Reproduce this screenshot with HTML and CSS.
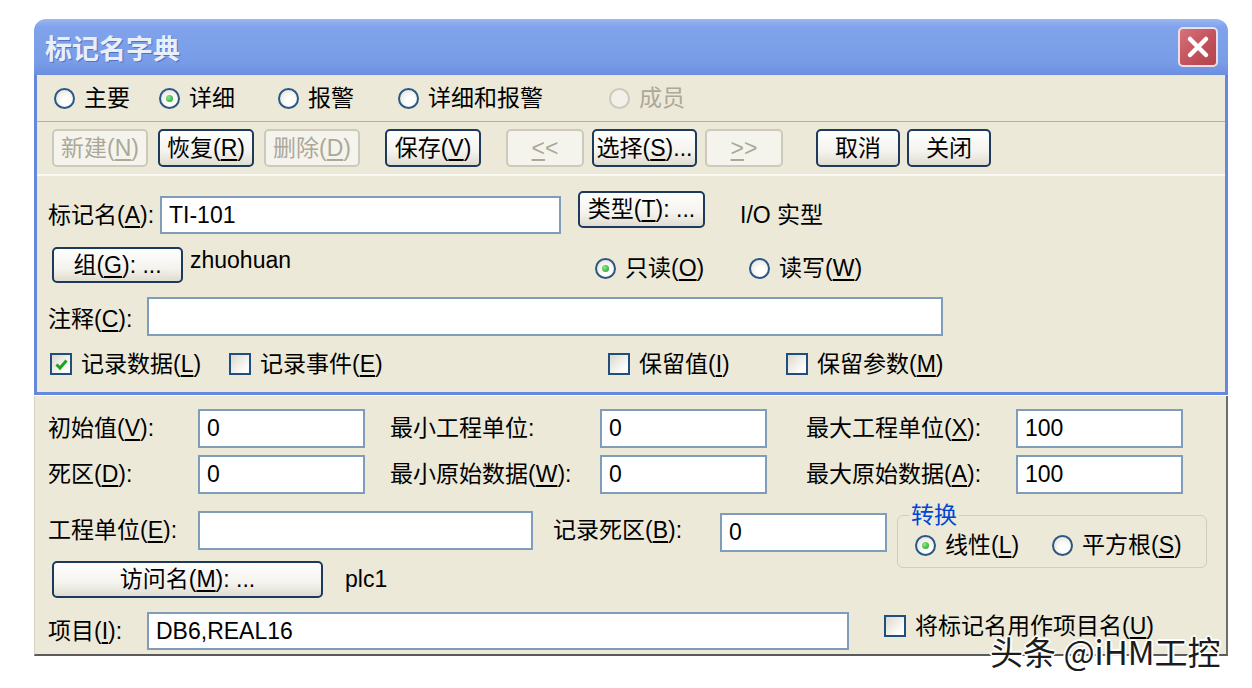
FILE: index.html
```html
<!DOCTYPE html>
<html lang="zh-CN">
<head>
  <meta charset="UTF-8" />
  <title>标记名字典</title>
  <link rel="stylesheet" href="styles.css">
</head>
<body>
  <div class="window">
    <div class="titlebar">
      <span class="title">标记名字典</span>
      <button class="close" title="关闭">
        <svg width="24" height="24" viewBox="0 0 24 24"><path d="M4 4 L20 20 M20 4 L4 20" stroke="#fff" stroke-width="4.5" stroke-linecap="round"/></svg>
      </button>
    </div>

    <div class="top">
      <div class="modes">
        <label class="opt"><span class="radio"></span><span>主要</span></label>
        <label class="opt"><span class="radio on"></span><span>详细</span></label>
        <label class="opt"><span class="radio"></span><span>报警</span></label>
        <label class="opt"><span class="radio"></span><span>详细和报警</span></label>
        <label class="opt off"><span class="radio"></span><span>成员</span></label>
      </div>

      <div class="toolbar">
        <div class="group">
          <button class="btn" disabled>新建(<u>N</u>)</button>
          <button class="btn">恢复(<u>R</u>)</button>
          <button class="btn" disabled>删除(<u>D</u>)</button>
        </div>
        <button class="btn">保存(<u>V</u>)</button>
        <div class="group nav">
          <button class="btn narrow" disabled><u>&lt;</u>&lt;</button>
          <button class="btn wide">选择(<u>S</u>)...</button>
          <button class="btn narrow" disabled><u>&gt;</u>&gt;</button>
        </div>
        <div class="group end">
          <button class="btn short">取消</button>
          <button class="btn short">关闭</button>
        </div>
      </div>

      <div class="fields">
        <div class="row row-tag">
          <span class="label lbl-tag">标记名(<u>A</u>):</span>
          <input class="field in-tag" value="TI-101">
          <button class="btn btn-type">类型(<u>T</u>): ...</button>
          <span class="value type-name">I/O 实型</span>
        </div>

        <div class="row row-group">
          <button class="btn btn-group">组(<u>G</u>): ...</button>
          <span class="value group-name">zhuohuan</span>
          <div class="access">
            <label class="opt opt-ro"><span class="radio on"></span><span>只读(<u>O</u>)</span></label>
            <label class="opt"><span class="radio"></span><span>读写(<u>W</u>)</span></label>
          </div>
        </div>

        <div class="row row-note">
          <span class="label lbl-short">注释(<u>C</u>):</span>
          <input class="field in-note" value="">
        </div>

        <div class="row row-checks">
          <label class="opt chk-a"><span class="check on"><svg width="17" height="17" viewBox="0 0 17 17"><path d="M3.5 8.5 L7 12 L13.5 4.5" fill="none" stroke="#21a121" stroke-width="3"/></svg></span><span>记录数据(<u>L</u>)</span></label>
          <label class="opt chk-b"><span class="check"></span><span>记录事件(<u>E</u>)</span></label>
          <label class="opt chk-c"><span class="check"></span><span>保留值(<u>I</u>)</span></label>
          <label class="opt"><span class="check"></span><span>保留参数(<u>M</u>)</span></label>
        </div>
      </div>
    </div>

    <div class="lower">
      <div class="grid">
        <span class="label">初始值(<u>V</u>):</span>
        <input class="field in-num" value="0">
        <span class="label lbl-mid">最小工程单位:</span>
        <input class="field in-num" value="0">
        <span class="label lbl-right">最大工程单位(<u>X</u>):</span>
        <input class="field in-num" value="100">

        <span class="label">死区(<u>D</u>):</span>
        <input class="field in-num" value="0">
        <span class="label lbl-mid">最小原始数据(<u>W</u>):</span>
        <input class="field in-num" value="0">
        <span class="label lbl-right">最大原始数据(<u>A</u>):</span>
        <input class="field in-num" value="100">
      </div>

      <div class="row row-units">
        <span class="label lbl-col">工程单位(<u>E</u>):</span>
        <input class="field in-unit" value="">
        <span class="label lbl-dead">记录死区(<u>B</u>):</span>
        <input class="field in-num dead" value="0">
        <fieldset class="convert">
          <legend>转换</legend>
          <div class="convert-opts">
            <label class="opt opt-lin"><span class="radio on"></span><span>线性(<u>L</u>)</span></label>
            <label class="opt"><span class="radio"></span><span>平方根(<u>S</u>)</span></label>
          </div>
        </fieldset>
      </div>

      <div class="row row-access">
        <button class="btn btn-access">访问名(<u>M</u>): ...</button>
        <span class="value access-name">plc1</span>
      </div>

      <div class="row row-item">
        <span class="label lbl-short">项目(<u>I</u>):</span>
        <input class="field in-item" value="DB6,REAL16">
        <label class="opt chk-item"><span class="check"></span><span>将标记名用作项目名(<u>U</u>)</span></label>
      </div>
    </div>
  </div>

  <div class="watermark">头条 @iHM工控</div>
</body>
</html>
```

FILE: styles.css
```css
body {
  margin: 0;
  background: #fff;
  font-family: "Liberation Sans", "Noto Sans CJK SC", sans-serif;
  font-size: 23px;
  color: #000;
}
u {
  text-underline-offset: 3px;
}

/* window frame */
.window {
  width: 1194px;
  margin: 19px 0 0 34px;
}
.titlebar {
  height: 56px;
  display: flex;
  align-items: center;
  padding: 0 10px 0 11px;
  border-radius: 12px 12px 0 0;
  background: linear-gradient(#9bb7f2, #80a3eb 14%, #789ce7 78%, #6b8fdf);
}
.title {
  font-family: "Noto Sans CJK SC", sans-serif;
  font-size: 27px;
  font-weight: bold;
  color: #e8eefb;
  text-shadow: 1px 1px 0 #5470c0;
}
.close {
  margin-left: auto;
  width: 40px;
  height: 40px;
  padding: 0;
  display: flex;
  align-items: center;
  justify-content: center;
  border: 2px solid #eadfe6;
  border-radius: 5px;
  background: linear-gradient(135deg, #d6737b, #c2525b 55%, #b1444d);
}
.top {
  background: #ece9d8;
  border: 3px solid #6488de;
  border-top: 0;
}

/* radios and checks */
.opt {
  display: flex;
  align-items: center;
  gap: 9px;
  white-space: nowrap;
  line-height: 26px;
  height: 26px;
}
.opt.off {
  color: #aca899;
}
.radio {
  flex: none;
  position: relative;
  width: 21px;
  height: 21px;
  box-sizing: border-box;
  border: 2px solid #2a5784;
  border-radius: 50%;
  background: radial-gradient(circle at 60% 65%, #fff 25%, #dedbd0 100%);
}
.radio.on::after {
  content: "";
  position: absolute;
  left: 5px;
  top: 5px;
  width: 7px;
  height: 7px;
  border-radius: 50%;
  background: radial-gradient(circle at 35% 35%, #8be88b, #1f9a1f);
}
.off .radio {
  border-color: #cbc9bc;
  background: #f2f0e8;
}
.check {
  flex: none;
  width: 22px;
  height: 22px;
  box-sizing: border-box;
  border: 2px solid #1f4f7e;
  background: linear-gradient(135deg, #dcd9cc, #fdfdfb 80%);
  display: flex;
  align-items: center;
  justify-content: center;
}

/* buttons */
.btn {
  width: 96px;
  height: 38px;
  box-sizing: border-box;
  padding: 0;
  font: inherit;
  line-height: 1;
  color: #000;
  border: 2px solid #1d3a5c;
  border-radius: 5px;
  background: linear-gradient(#fefefd, #f4f3ee 60%, #e0dcd0);
  white-space: nowrap;
}
.btn:disabled {
  color: #aca899;
  border-color: #cdcabb;
  background: #f5f4ec;
}
.btn.narrow {
  width: 78px;
}
.btn.wide {
  width: 105px;
}
.btn.short {
  width: 84px;
}

/* top section */
.modes {
  display: grid;
  grid-template-columns: 105px 119px 120px 211px auto;
  align-items: center;
  height: 46px;
  padding-left: 17px;
  border-bottom: 1px solid #b3b09c;
}
.toolbar {
  display: flex;
  gap: 25px;
  padding: 7px 0 7px 15px;
  border-bottom: 2px solid #faf9f4;
}
.group {
  display: flex;
  gap: 10px;
}
.group.nav {
  gap: 8px;
}
.group.end {
  gap: 7px;
  margin-left: 8px;
}
.fields {
  padding: 15px 0 15px 11px;
}
.row {
  display: flex;
  align-items: center;
}
.label {
  flex: none;
  white-space: nowrap;
}
.value {
  flex: none;
  white-space: nowrap;
}
.field {
  flex: none;
  height: 38px;
  box-sizing: border-box;
  border: 2px solid #7f9db9;
  background: #fff;
  padding: 0 0 0 7px;
  font: inherit;
  color: #000;
}
.row-tag {
  height: 43px;
  align-items: flex-end;
}
.row-tag .label,
.row-tag .value {
  line-height: 38px;
}
.lbl-tag {
  width: 112px;
}
.in-tag {
  width: 401px;
}
.btn-type {
  align-self: flex-start;
  width: 127px;
  height: 37px;
  margin-left: 17px;
}
.type-name {
  margin-left: 35px;
}
.row-group {
  margin-top: 13px;
  align-items: flex-start;
}
.btn-group {
  width: 131px;
  height: 36px;
  margin-left: 4px;
}
.group-name {
  width: 405px;
  margin-left: 7px;
  line-height: 26px;
}
.access {
  display: flex;
  margin-top: 8px;
}
.opt-ro {
  width: 154px;
}
.row-note {
  margin-top: 14px;
}
.lbl-short {
  width: 99px;
}
.in-note {
  width: 796px;
  height: 39px;
}
.row-checks {
  margin-top: 15px;
  padding-left: 2px;
}
.chk-a {
  width: 179px;
}
.chk-b {
  width: 379px;
}
.chk-c {
  width: 178px;
}

/* lower panel */
.lower {
  width: 1194px;
  box-sizing: border-box;
  margin-top: 1px;
  padding: 13px 0 4px 13px;
  background: #ece9d8;
  border-left: 1px solid #d6d2c2;
  border-right: 2px solid #6e6e6e;
  border-bottom: 2px solid #5a5a5a;
}
.lower .label {
  line-height: 39px;
}
.lower .field {
  height: 39px;
}
.grid {
  display: grid;
  grid-template-columns: 150px 167px 235px 167px 249px 167px;
  row-gap: 7px;
}
.lbl-mid {
  padding-left: 25px;
}
.lbl-right {
  padding-left: 39px;
}
.in-num {
  width: 167px;
}
.in-num.dead {
  margin-top: 2px;
}
.row-units {
  margin-top: 17px;
  align-items: flex-start;
}
.lbl-col {
  width: 150px;
}
.in-unit {
  width: 335px;
}
.lbl-dead {
  width: 167px;
  margin-left: 20px;
}
.convert {
  width: 310px;
  min-width: 0;
  box-sizing: border-box;
  margin: -8px 0 -7px 10px;
  padding: 0 0 4px 17px;
  border: 1px solid #d0cdbd;
  border-radius: 6px;
}
.convert legend {
  margin-left: -6px;
  padding: 0 2px;
  line-height: 24px;
  color: #0046d5;
}
.convert-opts {
  display: flex;
  align-items: center;
  height: 36px;
}
.opt-lin {
  width: 137px;
}
.row-access {
  height: 37px;
}
.btn-access {
  width: 271px;
  height: 37px;
  margin-left: 4px;
}
.access-name {
  margin-left: 22px;
}
.row-item {
  margin-top: 14px;
  align-items: flex-start;
}
.row-item .label {
  line-height: 38px;
}
.in-item {
  width: 702px;
}
.row-item .field {
  height: 38px;
}
.chk-item {
  height: 28px;
  margin-left: 35px;
}

.watermark {
  position: absolute;
  left: 990px;
  top: 634px;
  font-family: "Noto Sans CJK SC", sans-serif;
  font-size: 33px;
  line-height: 34px;
  color: #1c1c1c;
  white-space: nowrap;
  text-shadow: -2px 0 #fff, 2px 0 #fff, 0 -2px #fff, 0 2px #fff, -1px -1px #fff, 1px 1px #fff, 1px -1px #fff, -1px 1px #fff;
}
```
